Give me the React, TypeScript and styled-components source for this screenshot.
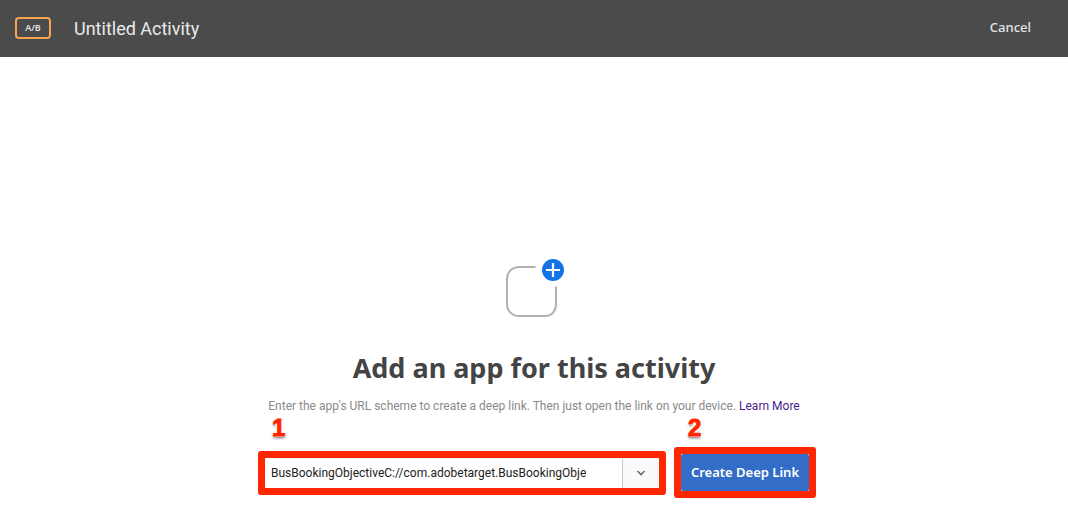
import React, { useState } from "react";
import styled, { createGlobalStyle } from "styled-components";

const GlobalStyle = createGlobalStyle`
  *, *::before, *::after { box-sizing: border-box; }
  body {
    margin: 0;
    background: #fff;
    color: #444;
    font-family: "Noto Sans", "Open Sans", sans-serif;
  }
`;

const Header = styled.header`
  display: flex;
  align-items: center;
  height: 57px;
  padding: 0 37px 2px 15px;
  background: #4b4b4b;
`;

const TypeBadge = styled.span`
  display: flex;
  align-items: center;
  justify-content: center;
  width: 36px;
  height: 22px;
  border: 2px solid #f9a453;
  border-radius: 4px;
  color: #e0e0e0;
  font-size: 9px;
  font-weight: 600;
  line-height: 12px;
`;

const ActivityName = styled.h1`
  margin: 2px auto 0 23px;
  color: #eaeaea;
  font-family: Roboto, sans-serif;
  font-size: 18px;
  font-weight: 400;
  line-height: 24px;
`;

const CancelButton = styled.button`
  padding: 0 0 2px;
  border: 0;
  background: none;
  color: #e4e4e4;
  font-family: inherit;
  font-size: 13px;
  font-weight: 500;
  line-height: 20px;
  cursor: pointer;
`;

const Main = styled.main`
  display: flex;
  flex-direction: column;
  align-items: center;
  padding: 200px 16px 32px;
`;

const Title = styled.h2`
  margin: 29px 0 0;
  font-size: 27px;
  font-weight: 700;
  line-height: 40px;
`;

const Hint = styled.p`
  margin: 10px 0 0;
  color: #8a8a8a;
  font-family: Roboto, sans-serif;
  font-size: 12px;
  line-height: 16px;
`;

const HelpLink = styled.a`
  color: #4b1a8c;
  text-decoration: none;
`;

const Form = styled.form`
  display: flex;
  gap: 8px;
  margin: 33px 0 0 6px;
`;

const Step = styled.div`
  position: relative;
  display: flex;
  align-items: center;
`;

const Highlight = styled.div`
  display: flex;
  border: 7px solid #ff2600;
  border-radius: 3px;
`;

const StepNumber = styled.span`
  position: absolute;
  bottom: 100%;
  left: 14px;
  margin-bottom: 7px;
  color: #ff2600;
  font-family: "Liberation Sans", Arial, sans-serif;
  font-size: 24px;
  font-weight: 700;
  line-height: 24px;
  -webkit-text-stroke: 1px #ff2600;
  text-shadow: -2px -1px 0 #fff, 2px 1px 0 #fff, 0 2px 3px rgba(0, 0, 0, 0.6);
`;

const UrlInput = styled.input`
  width: 357px;
  height: 30px;
  padding: 0 36px 0 6px;
  border: 0;
  background: #fff;
  color: #222;
  font-family: Roboto, sans-serif;
  font-size: 12px;
  outline: 0;
`;

const MenuButton = styled.button`
  display: flex;
  align-items: center;
  justify-content: center;
  width: 37px;
  height: 30px;
  padding: 0;
  border: 0;
  border-left: 1px solid #ccc;
  background: #fafafa;
`;

const CreateButton = styled.button`
  width: 128px;
  height: 37px;
  padding: 0 0 2px;
  border: 0;
  border-radius: 2px;
  background: #326ec8;
  color: #fff;
  font-family: inherit;
  font-size: 13px;
  font-weight: 600;
  white-space: nowrap;
  cursor: pointer;
`;

const AddAppIcon = () => (
  <svg width="60" height="62" viewBox="0 0 60 62" fill="none" aria-hidden="true">
    <path
      d="M31.500 10H15C8.500 10 3 15 3 22V47C3 54 8 59 15 59H41C48 59 52 54 52 47V29.500"
      stroke="#b1b1b1"
      strokeWidth="2"
    />
    <circle cx="49" cy="13" r="11" fill="#1473e6" />
    <path d="M49 6V20M42 13H56" stroke="#fff" strokeWidth="2.200" />
  </svg>
);

export default function App() {
  const [url, setUrl] = useState("BusBookingObjectiveC://com.adobetarget.BusBookingObje");
  return (
    <>
      <GlobalStyle />
      <Header>
        <TypeBadge>A/B</TypeBadge>
        <ActivityName>Untitled Activity</ActivityName>
        <CancelButton type="button">Cancel</CancelButton>
      </Header>
      <Main>
        <AddAppIcon />
        <Title>Add an app for this activity</Title>
        <Hint>
          Enter the app's URL scheme to create a deep link. Then just open the link on your device.{" "}
          <HelpLink href="#learn-more">Learn More</HelpLink>
        </Hint>
        <Form onSubmit={(e) => e.preventDefault()}>
          <Step>
            <StepNumber>1</StepNumber>
            <Highlight>
              <UrlInput
                aria-label="App URL scheme"
                value={url}
                spellCheck={false}
                onChange={(e) => setUrl(e.target.value)}
              />
              <MenuButton type="button" aria-label="Show URL schemes">
                <svg width="10" height="6" viewBox="0 0 10 6" fill="none" aria-hidden="true">
                  <path d="M1.500 1L5 4.500L8.500 1" stroke="#6b6b6b" strokeWidth="1.600" />
                </svg>
              </MenuButton>
            </Highlight>
          </Step>
          <Step>
            <StepNumber>2</StepNumber>
            <Highlight>
              <CreateButton type="submit">Create Deep Link</CreateButton>
            </Highlight>
          </Step>
        </Form>
      </Main>
    </>
  );
}
